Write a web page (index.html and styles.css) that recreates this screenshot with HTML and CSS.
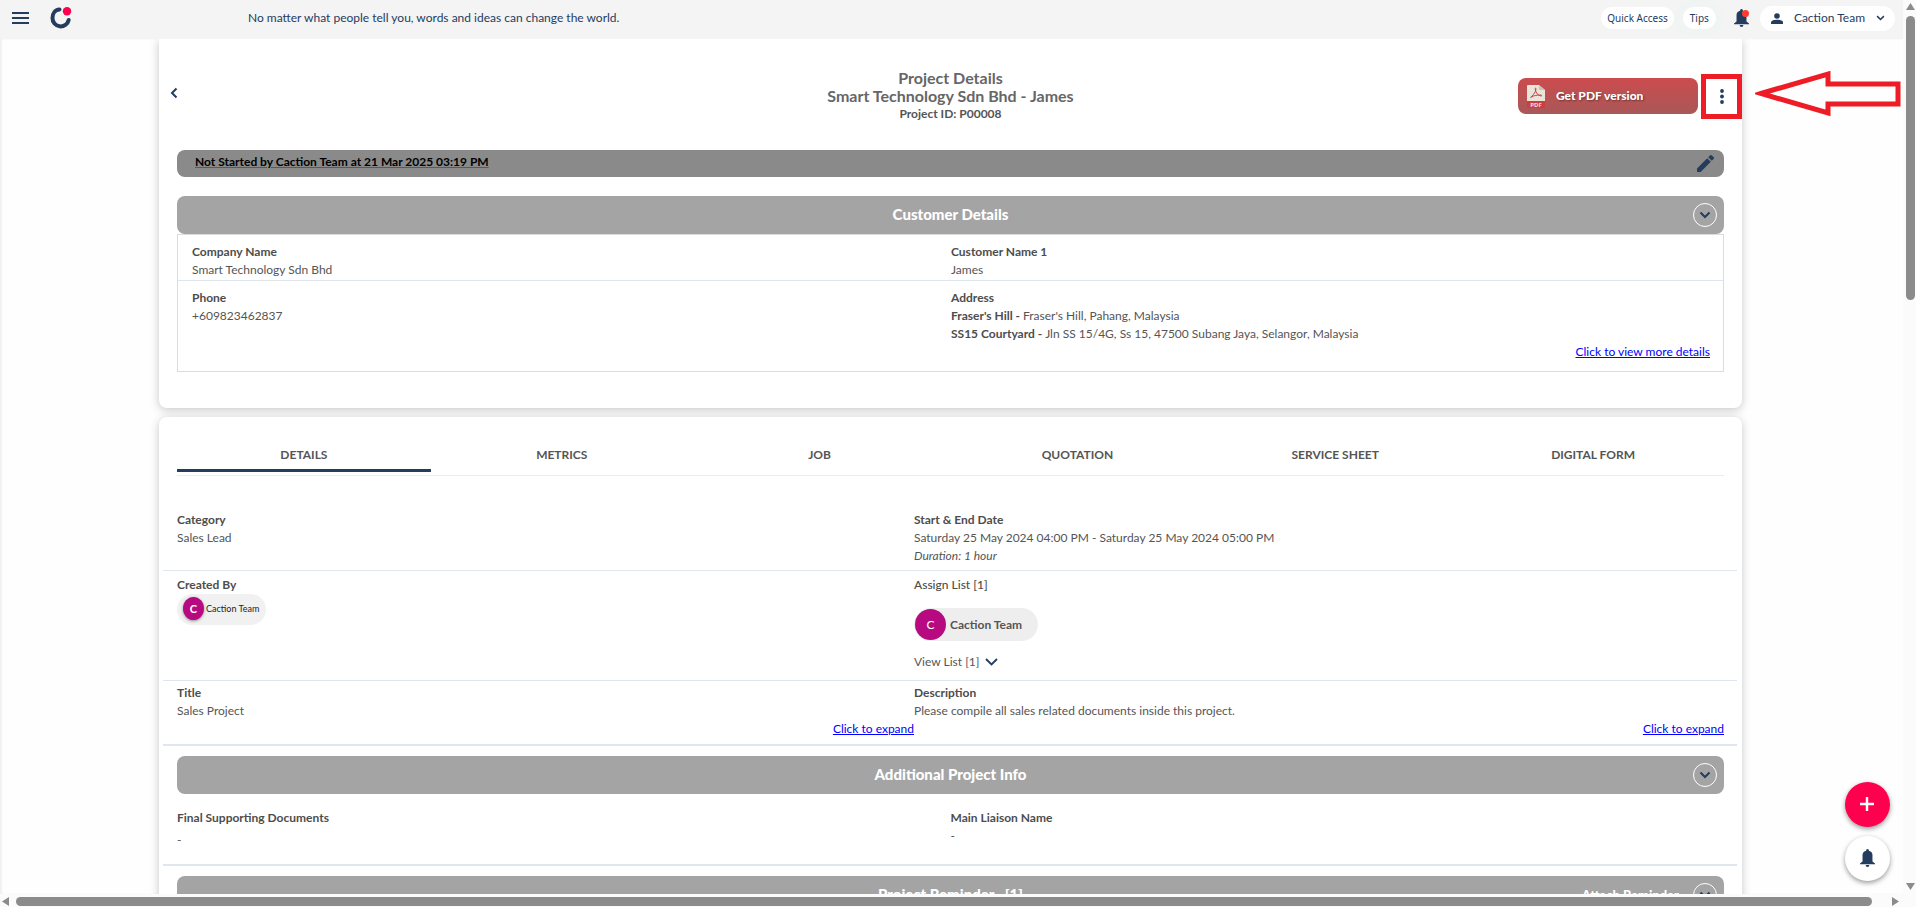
FILE: index.html
```html
<!DOCTYPE html>
<html lang="en">
<head>
<meta charset="utf-8">
<title>Project Details</title>
<link rel="stylesheet" href="styles.css">
</head>
<body>
<svg class="defs" aria-hidden="true">
  <symbol id="chev" viewBox="0 0 12 8"><path d="M1.500 1.500L6 6l4.500-4.500" fill="none" stroke="currentColor" stroke-width="2"/></symbol>
  <symbol id="bell" viewBox="0 0 16 19"><path d="M8 0a1.500 1.500 0 0 1 1.500 1.700A5 5 0 0 1 13.300 7v6.200L16 15.400v.8H0v-.8l2.700-2.200V7A5 5 0 0 1 6.500 1.700 1.500 1.500 0 0 1 8 0z" fill="currentColor"/><path d="M6 17h4a2 2 0 0 1-4 0z" fill="currentColor"/></symbol>
</svg>
<div class="app">
  <header class="topbar">
    <button class="icon-btn menu" aria-label="Menu"><svg width="17" height="12" viewBox="0 0 17 12"><path d="M0 1h17M0 6h17M0 11h17" stroke="currentColor" stroke-width="2"/></svg></button>
    <a class="logo" href="#" aria-label="Home"><svg width="22" height="22" viewBox="0 0 22 22"><path d="M9.500 2.500C5 2.800 2.500 6.500 2.500 11a8.200 8.200 0 0 0 16.200 2" fill="none" stroke="#243c5e" stroke-width="4" stroke-linecap="round"/><circle cx="17" cy="4.200" r="4.200" fill="#ff004f"/></svg></a>
    <p class="quote">No matter what people tell you, words and ideas can change the world.</p>
    <nav class="tools">
      <button class="pill small">Quick Access</button>
      <button class="pill small tips">Tips</button>
      <button class="icon-btn notify" aria-label="Notifications"><svg width="15" height="18"><use href="#bell"/></svg><span class="dot"></span></button>
      <button class="pill user"><svg width="12" height="11" viewBox="0 0 12 11"><circle cx="6" cy="3" r="2.800" fill="currentColor"/><path d="M0 11V9.500C0 7.500 3.500 6.800 6 6.800s6 .7 6 2.700V11z" fill="currentColor"/></svg><span>Caction Team</span><svg width="9" height="6"><use href="#chev"/></svg></button>
    </nav>
  </header>

  <main class="page">
    <section class="card first">
      <div class="head">
        <button class="icon-btn back" aria-label="Back"><svg width="8" height="12" viewBox="0 0 8 12"><path d="M6.500 1.500L2 6l4.500 4.500" fill="none" stroke="currentColor" stroke-width="2"/></svg></button>
        <div class="titles">
          <h1>Project Details</h1>
          <h2>Smart Technology Sdn Bhd - James</h2>
          <p>Project ID: P00008</p>
        </div>
        <div class="actions">
          <button class="pdf"><svg width="18" height="23" viewBox="0 0 18 23"><path d="M1 0h11l6 5v11H0V1a1 1 0 0 1 1-1z" fill="#e9e5d8"/><path d="M12 0l6 5h-6z" fill="#c9c3b4"/><path d="M4 12.500c1-2 4.500-4 5-8.500.200-1.200-1-1.200-.8 0C8.800 8 11 10.500 14 11c1 .2.800-1 0-1-3.500-.2-7 .6-9.500 1.800-.9.600-.8 1.400-.5.700z" fill="none" stroke="#c4474a" stroke-width="1"/><path d="M0 16h18v7H0z" fill="#c9403f"/><text x="9" y="21.500" text-anchor="middle" class="pdf-tag">PDF</text></svg><span>Get PDF version</span></button>
          <button class="more" aria-label="More actions"><svg width="4" height="15" viewBox="0 0 4 15"><g fill="currentColor"><circle cx="2" cy="2" r="1.900"/><circle cx="2" cy="7.500" r="1.900"/><circle cx="2" cy="13" r="1.900"/></g></svg></button>
        </div>
        <svg class="arrow" width="146" height="48" viewBox="0 0 146 48" aria-hidden="true"><path d="M6 24.500L73 5v10h70v20H73v9z" fill="none" stroke="#ee1c24" stroke-width="5"/></svg>
      </div>

      <div class="status"><a href="#">Not Started by Caction Team at 21 Mar 2025 03:19 PM</a>
        <button class="icon-btn" aria-label="Edit status"><svg width="17" height="17" viewBox="0 0 17 17"><path d="M0 17v-3.600L10.200 3.200l3.600 3.600L3.600 17zM11.200 2.200L12.900.5a1.400 1.400 0 0 1 2 0l1.600 1.600a1.400 1.400 0 0 1 0 2l-1.700 1.700z" fill="currentColor"/></svg></button>
      </div>

      <div class="bar"><h3>Customer Details</h3><button class="toggle" aria-label="Toggle customer details"><svg width="12" height="8"><use href="#chev"/></svg></button></div>
      <div class="customer">
        <div class="crow">
          <div><h4>Company Name</h4><p>Smart Technology Sdn Bhd</p></div>
          <div><h4>Customer Name 1</h4><p>James</p></div>
        </div>
        <div class="crow">
          <div><h4>Phone</h4><p>+609823462837</p></div>
          <div><h4>Address</h4><p><b>Fraser's Hill - </b>Fraser's Hill, Pahang, Malaysia</p><p><b>SS15 Courtyard - </b>Jln SS 15/4G, Ss 15, 47500 Subang Jaya, Selangor, Malaysia</p><p class="right"><a href="#">Click to view more details</a></p></div>
        </div>
      </div>
    </section>

    <section class="card second">
      <nav class="tabs">
        <button class="tab active">DETAILS</button><button class="tab">METRICS</button><button class="tab">JOB</button><button class="tab">QUOTATION</button><button class="tab">SERVICE SHEET</button><button class="tab">DIGITAL FORM</button>
      </nav>
      <div class="row dates">
        <div><h4>Category</h4><p>Sales Lead</p></div>
        <div><h4>Start &amp; End Date</h4><p>Saturday 25 May 2024 04:00 PM - Saturday 25 May 2024 05:00 PM</p><p><i>Duration: 1 hour</i></p></div>
      </div>
      <div class="row people">
        <div><h4>Created By</h4><span class="chip mini"><span class="avatar">C</span>Caction Team</span></div>
        <div><p class="assign">Assign List [1]</p><span class="chip"><span class="avatar">C</span>Caction Team</span>
          <button class="view">View List [1]<svg width="13" height="8" viewBox="0 0 13 8"><path d="M1 1l5.500 5.500L12 1" fill="none" stroke="currentColor" stroke-width="1.800"/></svg></button></div>
      </div>
      <div class="row desc">
        <div><h4>Title</h4><p>Sales Project</p><p class="right"><a href="#">Click to expand</a></p></div>
        <div><h4>Description</h4><p>Please compile all sales related documents inside this project.</p><p class="right"><a href="#">Click to expand</a></p></div>
      </div>
      <div class="bar"><h3>Additional Project Info</h3><button class="toggle" aria-label="Toggle additional info"><svg width="12" height="8"><use href="#chev"/></svg></button></div>
      <div class="row info">
        <div class="docs"><h4>Final Supporting Documents</h4><p>-</p></div>
        <div><h4>Main Liaison Name</h4><p>-</p></div>
      </div>
      <div class="bar"><h3>Project Reminder &nbsp; [1]</h3><button class="attach">Attach Reminder</button><button class="toggle" aria-label="Toggle reminders"><svg width="12" height="8"><use href="#chev"/></svg></button></div>
    </section>
  </main>

  <div class="vbar" aria-hidden="true"><svg width="9" height="7" viewBox="0 0 9 7"><path d="M4.500 0L9 7H0z" fill="#8b8b8b"/></svg><span class="vtrack"><span class="vthumb"></span></span><svg width="9" height="7" viewBox="0 0 9 7"><path d="M4.500 7L9 0H0z" fill="#8b8b8b"/></svg></div>
  <div class="hbar" aria-hidden="true"><svg width="7" height="9" viewBox="0 0 7 9"><path d="M0 4.500L7 0v9z" fill="#8b8b8b"/></svg><span class="hthumb"></span><svg width="7" height="9" viewBox="0 0 7 9"><path d="M7 4.500L0 0v9z" fill="#8b8b8b"/></svg></div>

  <div class="fabs">
    <button class="fab add" aria-label="Add"><svg width="14" height="14" viewBox="0 0 14 14"><path d="M7 0v14M0 7h14" stroke="#fff" stroke-width="2.400"/></svg></button>
    <button class="fab" aria-label="Reminders"><svg width="15" height="18"><use href="#bell"/></svg></button>
  </div>
</div>
</body>
</html>
```

FILE: styles.css
```css
* { box-sizing: border-box; }
body { margin: 0; background: #fefefe; color: #555; font: 12px/18px Lato, "Noto Sans", sans-serif; }
h1, h2, h3, h4, p { margin: 0; font-size: inherit; }
button { font: inherit; color: inherit; background: none; border: 0; padding: 0; cursor: pointer; }
svg { display: block; flex: none; }
.defs { position: absolute; width: 0; height: 0; }
a { color: #00f; }
b, h4 { font-weight: 700; color: #4d4d4d; }

.app { display: grid; grid-template: 39px minmax(0, 1fr) 13px / minmax(0, 1fr) 13px; height: 100vh; overflow: hidden; }

.topbar { display: flex; align-items: center; background: #f4f4f4; color: #243c5e; padding: 0 8px 3px 12px; }
.icon-btn { color: #243c5e; display: flex; }
.logo { margin-left: 21px; }
.quote { margin-left: 176px; }
.tools { margin-left: auto; display: flex; align-items: center; }
.pill { background: #fff; border-radius: 13px; display: flex; align-items: center; }
.pill.small { height: 22px; padding: 0 6px; font-size: 10px; font-family: "Noto Sans", sans-serif; }
.pill.tips { margin-left: 9px; padding: 0 7px; box-shadow: 0 0 0 8px #f0f4f3; }
.notify { position: relative; margin: 0 11px 0 18px; }
.dot { position: absolute; top: 1px; right: 0; width: 7px; height: 7px; border-radius: 50%; background: #ff3b30; }
.pill.user { height: 25px; padding: 0 10px 0 11px; gap: 11px; }

.page { overflow: hidden; padding: 0 161px 0 159px; box-shadow: inset 2px 0 2px #f1f1f1; }
.card { background: #fff; border-radius: 8px; box-shadow: 0 2px 10px rgba(0, 0, 0, .22); padding: 0 18px; }
.card.first { border-radius: 0 0 8px 8px; padding-bottom: 36px; }
.card.second { margin-top: 9px; padding-top: 25px; padding-bottom: 40px; }

.head { position: relative; display: grid; grid-template-columns: 1fr auto 1fr; align-items: center; margin: 0 -18px; padding: 30px 0 27px 11px; }
.back { padding-bottom: 6px; }
.titles { text-align: center; font-weight: 700; margin-right: 11px; }
.titles h1, .titles h2 { font-size: 16px; color: #666; }
.actions { display: flex; justify-content: flex-end; align-items: center; gap: 3px; margin: -5px 0; }
.pdf { display: flex; align-items: center; gap: 11px; width: 180px; height: 36px; padding: 0 9px; border-radius: 8px; background: linear-gradient(#cc4b4e, #a95858); color: #fff; font-weight: 900; text-shadow: 1px 1px 2px rgba(0, 0, 0, .4); }
.pdf-tag { font: 700 6px "Noto Sans", sans-serif; fill: #f3dede; text-shadow: none; }
.more { width: 41px; height: 45px; border: 5px solid #ee1c24; display: grid; place-items: center; color: #243c5e; }
.arrow { position: absolute; left: 100%; top: 30px; margin-left: 13px; }

.status { display: flex; align-items: center; justify-content: space-between; height: 27px; padding: 0 10px 0 18px; border-radius: 8px; background: #8a8a8a; }
.status a { color: #000; font-weight: 700; text-decoration-color: #33638f; padding-bottom: 3px; }

.bar { position: relative; display: flex; align-items: center; justify-content: flex-end; height: 38px; padding-right: 7px; border-radius: 8px; background: #a4a4a4; color: #fff; }
.bar h3 { position: absolute; inset: 0; text-align: center; font-size: 15px; font-weight: 900; line-height: 36px; }
.toggle { position: relative; width: 24px; height: 24px; border: 1px solid #fff; border-radius: 50%; display: grid; place-items: center; color: #243c5e; }
.attach { position: relative; margin-right: 14px; font-size: 13px; font-weight: 900; }
.first .bar { margin-top: 19px; }

.customer { border: 1px solid #dcdcdc; }
.crow { display: grid; grid-template-columns: 1fr 1fr; padding: 8px 13px 1px 14px; }
.crow + .crow { border-top: 1px solid #e0e6ee; padding-bottom: 10px; }
.right { text-align: right; }

.tabs { display: grid; grid-template-columns: repeat(6, 1fr); border-bottom: 1px solid #eaecee; padding-bottom: 3px; }
.tab { margin-right: 4px; padding: 4px 0 5px; border-bottom: 3px solid transparent; font-weight: 700; color: #555; }
.tab.active { border-color: #243c5e; }

.row { display: grid; grid-template-columns: 737fr 810fr; margin: 0 -13px 0 -14px; padding: 0 13px 0 14px; border-bottom: 1px solid #e0e6ee; }
.dates { padding-top: 35px; padding-bottom: 5px; }
.people { padding-top: 5px; padding-bottom: 9px; }
.desc { padding-top: 3px; padding-bottom: 6px; border-width: 2px; }
.desc + .bar { margin-top: 10px; }
.info { grid-template-columns: 1fr 1fr; padding-top: 15px; padding-bottom: 15px; border-width: 2px; margin-bottom: 10px; }
.docs p { margin-top: 4px; }
.people > div { display: flex; flex-direction: column; align-items: flex-start; }
.assign { color: #4d4d4d; font-weight: 500; }
.chip { display: flex; align-items: center; gap: 4px; height: 33px; margin-top: 14px; padding: 0 16px 0 1px; border-radius: 17px; background: #eee; font-weight: 700; }
.avatar { width: 31px; height: 31px; border-radius: 50%; background: #b80a80; color: #fff; display: grid; place-items: center; font-weight: 400; }
.chip.mini { height: 31px; margin-top: 0; padding: 0 7px 2px 6px; gap: 2px; font-size: 9px; font-weight: 400; color: #222; background: #f1f1f1; }
.mini .avatar { width: 21px; height: 23px; font-size: 11px; font-weight: 700; box-shadow: 0 1px 3px rgba(0, 0, 0, .4); }
.view { display: flex; align-items: center; gap: 6px; margin-top: 12px; }
.view svg { color: #243c5e; }

.vbar { grid-area: 1 / 2 / 3 / 3; background: #fbfbfb; display: flex; flex-direction: column; align-items: center; padding: 3px 0 4px 2px; gap: 6px; }
.vtrack { flex: 1; }
.vthumb { display: block; width: 9px; height: 33%; border-radius: 5px; background: #8b8b8b; }
.hbar { grid-area: 3 / 1 / 4 / 3; background: #fbfbfb; display: flex; align-items: center; padding: 2px 17px 0 2px; gap: 7px; }
.hthumb { flex: 1; height: 9px; margin-right: 13px; border-radius: 5px; background: #8b8b8b; }

.fabs { position: fixed; right: 26px; bottom: 26px; display: grid; gap: 9px; }
.fab { width: 45px; height: 45px; border-radius: 50%; background: #fff; color: #243c5e; display: grid; place-items: center; padding: 0 1px 2px 0; box-shadow: 0 2px 5px rgba(0, 0, 0, .4); }
.fab.add { background: #ff004f; }
```
